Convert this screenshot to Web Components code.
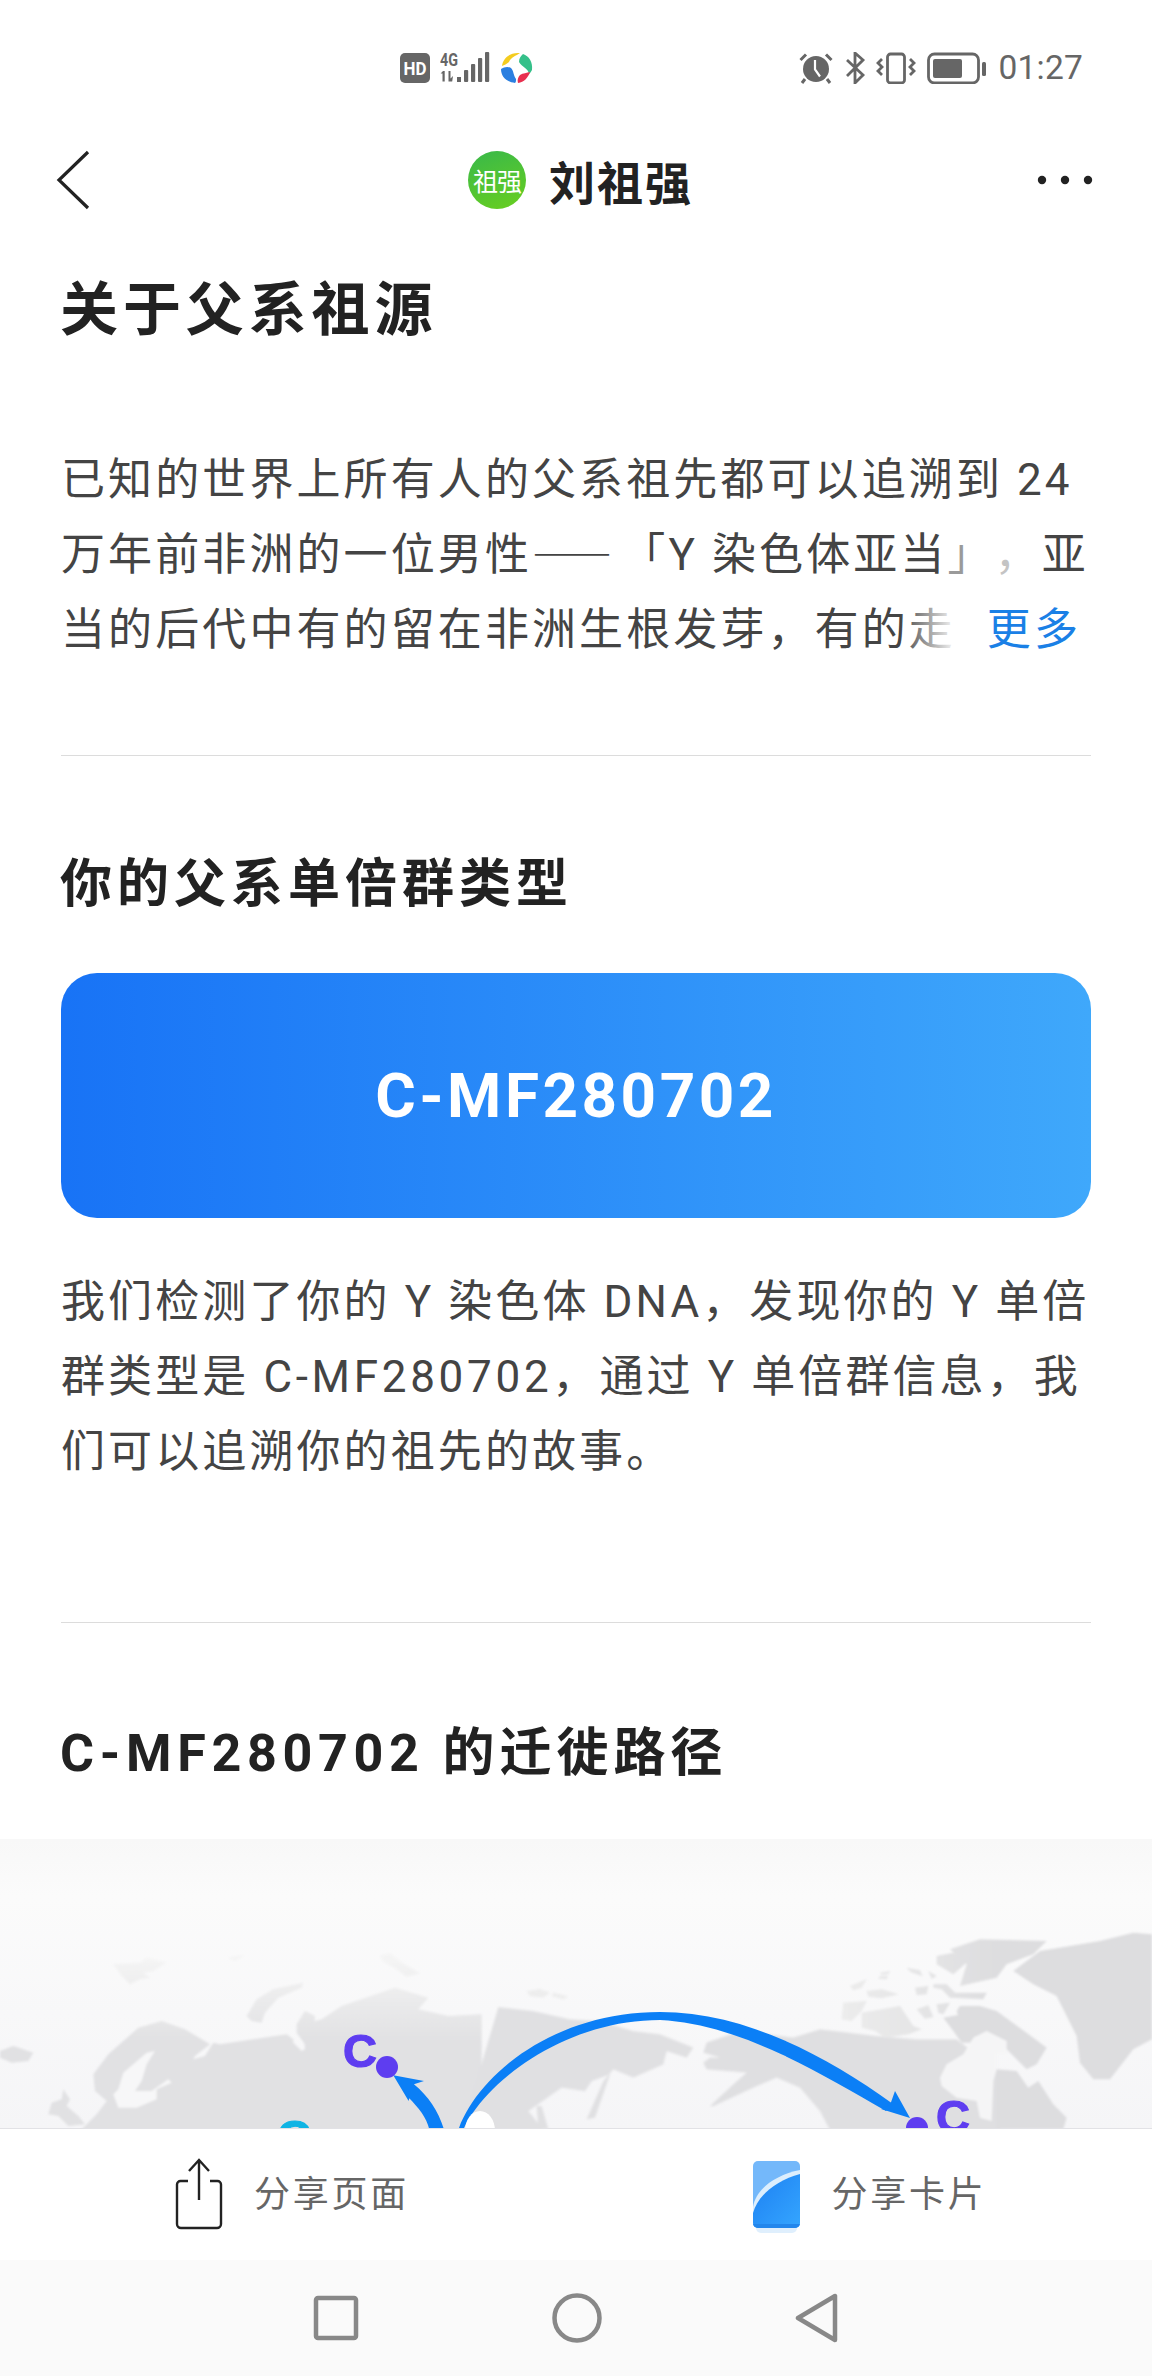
<!DOCTYPE html>
<html lang="zh-CN">
<head>
<meta charset="utf-8">
<title>关于父系祖源</title>
<style>
  html,body{margin:0;padding:0;background:#fff;}
  body{width:1152px;height:2376px;overflow:hidden;font-family:Roboto,"Noto Sans CJK SC",sans-serif;}
  app-page{height:2376px;}
  .dash{font-family:"Noto Sans CJK SC",sans-serif;line-height:0;font-size:40px;letter-spacing:9.300px;font-weight:500;}
  .lat{letter-spacing:5.7px;}
  .lat-b{letter-spacing:3.700px;}
</style>
</head>
<body>
<app-page>
  <status-bar slot="top"></status-bar>
  <title-bar slot="top" name="刘祖强" badge="祖强"></title-bar>
  <page-heading level="1" style="margin-top:4px">关于父系祖源</page-heading>
  <body-text more style="margin-top:93px">已知的世界上所有人的父系祖先都可以追溯到 24<br>万年前非洲的一位男性<span class="dash">——</span>「Y 染色体亚当<span style="color:#9a9a9a">」</span><span style="color:#c4c4c4">，</span>亚<br>当的后代中有的留在非洲生根发芽，有的走</body-text>
  <hair-line style="margin-top:87px"></hair-line>
  <page-heading style="margin-top:89px">你的父系单倍群类型</page-heading>
  <haplo-card style="margin-top:48px">C-MF280702</haplo-card>
  <body-text style="margin-top:47px">我们检测了你的 Y 染色体 DNA，发现你的 Y 单倍<br>群类型是 <span class="lat-b">C-MF280702</span>，通过 Y 单倍群信息，我<br>们可以追溯你的祖先的故事。</body-text>
  <hair-line style="margin-top:132px"></hair-line>
  <page-heading style="margin-top:91px"><span class="lat">C-MF280702</span> 的迁徙路径</page-heading>
  <route-map style="margin-top:45px"></route-map>
  <share-bar slot="bottom"></share-bar>
  <nav-bar slot="bottom"></nav-bar>
</app-page>
<script>
function def(name, html, init){
  const t=document.createElement('template');t.innerHTML=html;
  customElements.define(name,class extends HTMLElement{
    constructor(){super();this.attachShadow({mode:'open'}).appendChild(t.content.cloneNode(true));}
    connectedCallback(){init&&init(this);}
  });
}
def('app-page',`<style>
:host{display:flex;flex-direction:column;width:1152px;overflow:hidden;background:#fff}
.main{flex:1;min-height:0;overflow:hidden;display:flex;flex-direction:column}
.foot{flex:none}
</style><slot name="top"></slot><div class="main"><slot></slot></div><div class="foot"><slot name="bottom"></slot></div>`);

def('status-bar',`<style>
:host{display:flex;justify-content:space-between;align-items:center;height:100px;box-sizing:border-box;padding:36px 69px 0 400px;color:#666}
.g{display:flex;align-items:center}
svg{display:block}
.time{font:400 33.5px/36px Roboto,sans-serif;color:#666;margin-left:12px;letter-spacing:.2px}
</style>
<div class="g">
<svg width="30" height="30" viewBox="0 0 30 30"><rect width="30" height="30" rx="5" fill="#666"/><text x="15" y="21.5" text-anchor="middle" font-family="Roboto,sans-serif" font-weight="700" font-size="18.5" fill="#fff" textLength="23" lengthAdjust="spacingAndGlyphs">HD</text></svg>
<svg style="margin-left:10px" width="51" height="34" viewBox="0 0 51 34">
 <text x="0" y="15" font-family="Roboto,sans-serif" font-weight="700" font-size="18" fill="#666" textLength="18" lengthAdjust="spacingAndGlyphs">4G</text>
 <path d="M3 20l-2.400 2.400h1.900v8h2.200V20zM8.500 20h2v7.500l2.500-2.500-.8 5.500H8.500z" fill="#666"/>
 <rect x="17" y="26" width="4" height="5" fill="#666"/><rect x="24" y="19" width="4.200" height="12" rx="1" fill="#666"/><rect x="31" y="13" width="4.200" height="18" rx="1" fill="#666"/><rect x="38" y="7" width="4.200" height="24" rx="1" fill="#666"/><rect x="45" y="1" width="4.200" height="30" rx="1" fill="#666"/>
</svg>
<svg style="margin-left:9px" width="34" height="34" viewBox="0 0 34 34">
 <path d="M2 15C3 7 10 1 20 2c-4 3-9 4-11 9-2 2-5 3-7 4z" fill="#f4cc1f"/>
 <path d="M23 3c6 2 10 8 9 16-1 2-2 3-3 4-1-6-7-7-10-12 0-4 2-6 4-8z" fill="#35c08a"/>
 <path d="M1 18c3-2 7-3 10-1 3 3 2 7 5 11 0 2 0 3-1 4C7 31 1 26 1 18z" fill="#2b7fe0"/>
 <path d="M18 32c-1-3 0-6 2-8 3-2 7-2 10-3-2 6-6 10-12 11z" fill="#e8304f"/>
</svg>
</div>
<div class="g">
<svg width="34" height="32" viewBox="0 0 34 32">
 <circle cx="17" cy="17" r="13" fill="#666"/><path d="M16 8v9.500l5 7" fill="none" stroke="#fff" stroke-width="2.200"/>
 <path d="M1.500 8L7 2.500M32.500 8L27 2.500M6 27l-3 4M28 27l3 4" stroke="#666" stroke-width="3" fill="none"/>
</svg>
<svg style="margin-left:12px" width="21" height="32" viewBox="0 0 21 32"><path d="M2 8l16 15-8 8V1l8 7L2 24" fill="none" stroke="#666" stroke-width="2.800"/></svg>
<svg style="margin-left:10px" width="40" height="32" viewBox="0 0 40 32">
 <rect x="11.500" y="2" width="17" height="29" rx="3" fill="none" stroke="#666" stroke-width="2.800"/>
 <path d="M6 7L2 11l4 4-4 4 4 4M34 7l4 4-4 4 4 4-4 4" fill="none" stroke="#666" stroke-width="2.800"/>
</svg>
<svg style="margin-left:11px" width="60" height="32" viewBox="0 0 60 32">
 <rect x="1.500" y="2" width="50" height="29" rx="6" fill="none" stroke="#666" stroke-width="2.800"/>
 <rect x="6" y="7" width="29" height="19" rx="2" fill="#666"/>
 <rect x="55" y="10" width="4" height="14" rx="1.500" fill="#666"/>
</svg>
<span class="time">01:27</span>
</div>`);

def('title-bar',`<style>
:host{display:grid;grid-template-columns:1fr auto 1fr;align-items:center;height:166px;box-sizing:border-box;padding:0 59px 6px 56px;color:#222}
svg{display:block}
.mid{display:flex;align-items:center;gap:23px;margin-left:12px}
.av{width:58px;height:58px;border-radius:50%;background:linear-gradient(160deg,#38b84a,#69cf1f);color:#fff;font:400 25px/58px "Noto Sans CJK SC",sans-serif;text-align:center;letter-spacing:-1px;white-space:nowrap;overflow:hidden}
.nm{font:700 46px/60px "Noto Sans CJK SC",sans-serif;letter-spacing:2px;color:#222}
.r{justify-self:end}
</style>
<svg width="34" height="60" viewBox="0 0 34 60"><path d="M32 2L3 30l29 28" fill="none" stroke="#222" stroke-width="3.200"/></svg>
<div class="mid"><div class="av" id="b"></div><div class="nm" id="n"></div></div>
<svg class="r" width="56" height="10" viewBox="0 0 56 10"><circle cx="5" cy="5" r="4.200" fill="#222"/><circle cx="28" cy="5" r="4.200" fill="#222"/><circle cx="51" cy="5" r="4.200" fill="#222"/></svg>`,
el=>{el.shadowRoot.getElementById('n').textContent=el.getAttribute('name');el.shadowRoot.getElementById('b').textContent=el.getAttribute('badge');});

def('page-heading',`<style>
:host{display:block;padding:0 60px;height:80px;font-weight:700;font-size:52px;line-height:80px;letter-spacing:5px;color:#222;white-space:nowrap;flex:none}
:host([level="1"]){font-size:58px;letter-spacing:4.900px}
</style><slot></slot>`);

def('body-text',`<style>
:host{display:block;position:relative;margin:0 61px;font-size:44px;line-height:75px;letter-spacing:3.100px;color:#444;white-space:nowrap;flex:none;text-spacing-trim:space-all}
.more{display:none;position:absolute;right:0;bottom:0;height:75px;width:191px;box-sizing:border-box;padding-right:10px;text-align:right;color:#1a80e6;background:linear-gradient(90deg,rgba(255,255,255,0),#fff 30%)}
:host([more]) .more{display:block}
</style><slot></slot><div class="more">更多</div>`);

def('hair-line',`<style>:host{display:block;height:1px;margin:0 61px;background:#dcdcdc;flex:none}</style>`);

def('haplo-card',`<style>
:host{display:block;margin:0 61px;height:245px;border-radius:36px;background:linear-gradient(90deg,#1873f6,#3fa8fb);color:#fff;font-weight:700;font-size:62px;line-height:245px;letter-spacing:3.500px;text-align:center;flex:none}
</style><slot></slot>`);

def('route-map',`<style>:host{display:block;height:290px;flex:none}svg{display:block}</style>
<svg width="1152" height="290" viewBox="0 1838 1152 290">
<defs>
 <linearGradient id="bg" x1="0" y1="0" x2="0" y2="1"><stop offset="0" stop-color="#f8f8f8"/><stop offset=".2" stop-color="#fbfbfb"/><stop offset="1" stop-color="#f5f5f7"/></linearGradient>
 <linearGradient id="eu" gradientUnits="userSpaceOnUse" x1="0" y1="60" x2="0" y2="300"><stop offset="0" stop-color="#f4f4f4"/><stop offset="1" stop-color="#e1e1e3"/></linearGradient>
 <linearGradient id="ar" gradientUnits="userSpaceOnUse" x1="120" y1="0" x2="600" y2="0"><stop offset="0" stop-color="#ececec"/><stop offset="1" stop-color="#dddddf"/></linearGradient>
 <filter id="soft" x="-2%" y="-2%" width="104%" height="104%"><feGaussianBlur stdDeviation=".8"/></filter>
</defs>
<rect x="0" y="1838" width="1152" height="290" fill="url(#bg)"/>
<g filter="url(#soft)">
<g transform="translate(0 1940) scale(.3333)" fill="url(#eu)">
 <path d="M0 330l40-15 60 20-15 25-50 5-35-15zM340 70l80-5 20-15 60 15-40 25-30 5 20 15-30 5-30 15-25-25zM685 50l50-8-30 18zM1140 45l30-8 40 30 50 30-40 10-35-25-35-20zM740 225l30-50 50-30 90-20-5 15-70 30-40 45-10 30-30-5zM890 250l25-40 30 15-5 65-25 20-25-35zM190 445l20 30-10 20 35 30 20 25-50 5-30-30-30-5 10-35 30-10z"/>
 <path d="M240 570l50-50 30-40-35-30-5-50 45-60 90-80 70-20 70 25 75 45-45 35-5 10 35-10 25-40 20 5 100-15 100-15 20 15 0 10 25 25 10-5-5-75 55-15 60-40 160-55 100 30-30 35 90 20 100-5 0 380z"/>
 <path d="M440 335l25-5-25 40-15 50-20 30 50 0 50-35 10 10-45 20 0 30-60 25-55 0-15-40 15-15 15-50z" fill="#f7f7f8"/>
</g>
<g transform="translate(500 1940) scale(.3333)">
 <path d="M-5 198L100 210 210 235 300 240 400 270 480 280 580 320 560 350 500 330 490 370 400 410 340 385 310 420 260 535 285 530 330 400 275 420 255 450 185 440 85 510 125 560V570H-115Z" fill="#e0e0e2"/>
 <path d="M80 150l40-5 30 10-20 15-40-5zM160 155l45 12-15 8-35-10z" fill="#ededed"/>
 <path d="M110 495l15 0 20 70h-30z" fill="#e0e0e2"/>
 <path d="M610 335L620 305 720 270 880 290 960 265 1130 285 1250 295 1370 295 1500 395V595H1005L960 510 900 440 830 410 760 440 640 495 630 495 700 430 740 395 620 385 610 365 630 350 660 350Z" fill="#dfdfe1"/>
</g>
<g transform="translate(800 1920) scale(.3333)" fill="url(#ar)">
 <path d="M130 245l70-5-15 30-30 30-30-5zM185 275l115-20 40 60 25 10-40 15-70 10-30-20-40-10zM150 195l50-20-15 25-25 8zM200 210l45-5 50 15-50 12-40-5zM345 200l40-5-5 25-30 2zM350 265l35-12 15 35-25 5zM410 250l40-5-20 35-15-5zM400 190l40 0 25 25 95 0-10 20-100-5-25-25-25-5zM320 140l40 8 8 18-35-12zM385 150l25 15-15 8zM240 155l30-5-5 10-20 2zM240 165l25 0-5 10-25-2z"/>
 <path d="M410 105l50-10 40 30-40 35-50-30zM450 85l90-30 200 5-40 40-80 30-30 40-110 25 20-65z"/>
</g>
<g transform="translate(800 1920) scale(.3333)">
 <path d="M640 150l80-60 180-30 100-25 56 5v315l-56 30-70 90-50 0-40-50-10-80-20-40-40-80-70-35z" fill="#dddddf"/>
 <path d="M470 270l10-15 60 0 50 15 110 80 40 30-30 50-30 15-60-60-30 0-30-30-70-20z" fill="#dddddf"/>
 <path d="M430 290l30 40 25 35 30 0 30-50-20-30-20 20-20-25z" fill="#dddddf"/>
 <path d="M420 470L440 430 490 400 520 350 560 330 620 360 620 400 590 400 590 445 580 480 575 600 540 590 530 540 470 530 425 495Z" fill="#f5f5f6"/>
 <path d="M590 445L650 450 685 500 715 480 760 550 800 590 790 625H590Z" fill="#dddddf"/>
</g>
</g>
<g fill="#0b7ff6">
 <path d="M459 2127C480 2072 555 2011 660 2011C740 2011 820 2050 893 2103L886 2110C820 2072 740 2023 660 2019C570 2019 490 2075 464 2127Z"/>
 <path d="M910 2117L895 2090L890 2104L881 2108Z"/>
 <g transform="translate(0 1940) scale(.3333)"><path d="M1180 403L1272 420L1242 430C1285 465 1315 510 1332 565L1288 565C1280 530 1255 500 1228 472L1226 480Z"/></g>
</g>
<ellipse cx="480" cy="2130" rx="15" ry="20" fill="#fff"/>
<g font-family="'Liberation Sans',sans-serif" font-weight="700" font-size="47" stroke-width="1.200">
 <text x="343" y="2066" fill="#5e3df0" stroke="#5e3df0">C</text>
 <text x="936" y="2132" fill="#5e3df0" stroke="#5e3df0">C</text>
 <text x="277" y="2152" fill="#10b4e4" stroke="#10b4e4">C</text>
</g>
<circle cx="387" cy="2066" r="11" fill="#5e3df0"/>
<circle cx="917" cy="2127" r="11" fill="#5e3df0"/>
</svg>`);

def('share-bar',`<style>
:host{display:flex;height:132px;background:#fff;border-top:1px solid #e2e2e6;box-sizing:border-box;color:#666;font-size:36px;letter-spacing:2.800px;white-space:nowrap}
.i{flex:1;display:flex;align-items:center;justify-content:center;gap:31px;padding-left:10px}
.i+.i{padding-left:14px}
.i span{margin-bottom:8px}
svg{display:block;overflow:visible}
</style>
<div class="i"><svg width="48" height="72" viewBox="0 0 48 72" style="position:relative;top:-1px"><path d="M13 23H5.500A3.500 3.500 0 0 0 2 26.500V66a4 4 0 0 0 4 4H42a4 4 0 0 0 4-4V26.500A3.500 3.500 0 0 0 42.500 23H35M24 42V2M14 13L24 2L34 13" fill="none" stroke="#222" stroke-width="2.400"/></svg><span>分享页面</span></div>
<div class="i"><svg width="47" height="68" viewBox="0 0 47 68"><defs><linearGradient id="c" x1="0" y1="0" x2="1" y2="1"><stop offset="0" stop-color="#1d80f2"/><stop offset="1" stop-color="#35a6ff"/></linearGradient><clipPath id="k"><rect width="47" height="67" rx="5"/></clipPath></defs>
<rect x="3" y="4" width="41" height="68" rx="5" fill="#b9dcfb" opacity=".45"/>
<g clip-path="url(#k)"><rect width="47" height="67" fill="#74b8fa"/><path d="M0 68V46C3 28 22 14 47 9V68Z" fill="#dceefd"/><path d="M0 68V52C5 34 24 19 47 13V68Z" fill="url(#c)"/><rect y="63" width="47" height="4" fill="#2286ec"/></g></svg><span>分享卡片</span></div>`);

def('nav-bar',`<style>
:host{display:flex;height:116px;background:#fafafa;align-items:center;justify-content:center;gap:193px;box-sizing:border-box}
svg{display:block}
</style>
<svg width="46" height="46" viewBox="0 0 46 46"><rect x="3" y="3" width="40" height="40" rx="2" fill="none" stroke="#888" stroke-width="4.500"/></svg>
<svg width="50" height="50" viewBox="0 0 50 50"><circle cx="25" cy="25" r="22.500" fill="none" stroke="#888" stroke-width="4.500"/></svg>
<svg width="44" height="50" viewBox="0 0 44 50"><path d="M40 3V47L3 25Z" fill="none" stroke="#888" stroke-width="4.500" stroke-linejoin="round"/></svg>`);
</script>
</body>
</html>
